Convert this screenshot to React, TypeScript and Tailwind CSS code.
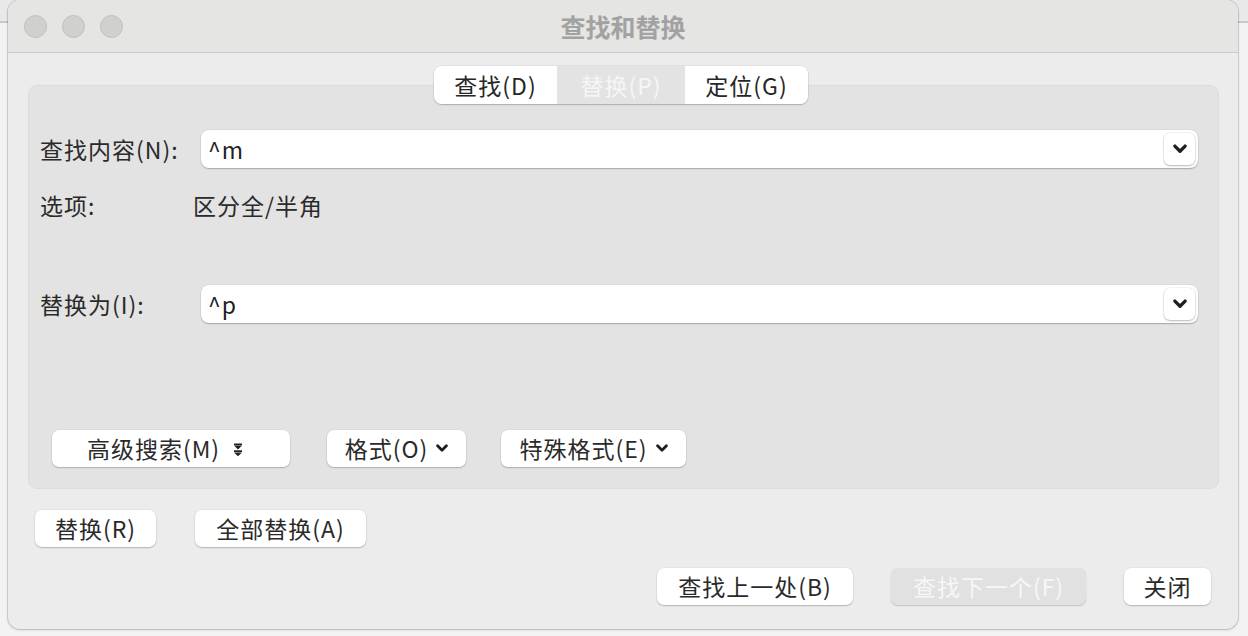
import React from "react";

const font = { fontFamily: '"Noto Sans CJK SC", "Liberation Sans", sans-serif' };

const Chevron = ({ size = 12, stroke = 2.6 }: { size?: number; stroke?: number }) => (
  <svg width={size} height={size * 0.7} viewBox="0 0 12 8" fill="none">
    <path d="M1.6 1.6 L6 6 L10.4 1.6" stroke="#1f1f1f" strokeWidth={stroke} strokeLinecap="round" strokeLinejoin="round" />
  </svg>
);

const DoubleArrow = () => (
  <svg width="10" height="14" viewBox="0 0 10 14">
    <rect x="1" y="0.5" width="8" height="1.7" fill="#1f1f1f" />
    <path d="M1 2.6 H9 L5 6.4 Z" fill="#1f1f1f" />
    <rect x="1" y="7.3" width="8" height="1.7" fill="#1f1f1f" />
    <path d="M1 9.4 H9 L5 13.2 Z" fill="#1f1f1f" />
  </svg>
);

const Btn = ({ children, w, disabled }: { children: React.ReactNode; w: string; disabled?: boolean }) => (
  <div
    className={`${w} h-[37px] flex items-center justify-center rounded-[7px] text-[23px] tracking-[1px] leading-none ${
      disabled
        ? "bg-[#e1e1e1] text-[#f7f7f7] shadow-[0_1px_1.5px_rgba(0,0,0,0.18)]"
        : "bg-white text-[#2a2a2a] shadow-[0_1px_1.5px_rgba(0,0,0,0.22),0_0_0_0.5px_rgba(0,0,0,0.06)]"
    }`}
  >
    {children}
  </div>
);

const ComboField = ({ value }: { value: string }) => (
  <div className="flex-1 h-[38px] bg-white rounded-[8px] shadow-[0_1px_1.5px_rgba(0,0,0,0.25),0_0_0_0.5px_rgba(0,0,0,0.06)] flex items-center pl-[7px] pr-[3px]">
    <span className="flex-1 text-[23px] leading-none text-[#1f1f1f]">{value}</span>
    <div className="w-[31px] h-[32px] rounded-[6px] bg-white shadow-[0_1px_2px_rgba(0,0,0,0.25),0_0_0_0.5px_rgba(0,0,0,0.08)] flex items-center justify-center">
      <Chevron size={14} stroke={2.8} />
    </div>
  </div>
);

export default function App() {
  return (
    <div
      style={font}
      className="w-[1248px] h-[636px] overflow-hidden bg-[linear-gradient(to_bottom,#e9e9e9_0px,#e9e9e9_21px,#c9c9c9_21px,#c9c9c9_23px,#f3f3f3_23px)] pl-[8px]"
    >
      <div className="w-[1230px] h-[629px] rounded-[12px] overflow-hidden bg-[#ececec] shadow-[0_0_0_1px_rgba(0,0,0,0.12),0_1px_3px_rgba(0,0,0,0.15)] flex flex-col">
        {/* title bar */}
        <div className="h-[53px] shrink-0 bg-[#e5e5e3] border-b border-[#cbcbc9] grid grid-cols-[1fr_auto_1fr] items-center">
          <div className="flex items-center gap-[15px] pl-[16px]">
            <div className="w-[23px] h-[23px] rounded-full bg-[#d0d0ce] border border-[#c0c0be]" />
            <div className="w-[23px] h-[23px] rounded-full bg-[#d0d0ce] border border-[#c0c0be]" />
            <div className="w-[23px] h-[23px] rounded-full bg-[#d0d0ce] border border-[#c0c0be]" />
          </div>
          <div className="text-[25px] font-bold text-[#a2a2a2] leading-none">查找和替换</div>
          <div />
        </div>

        {/* content */}
        <div className="flex-1 flex flex-col px-[20px] pr-[19px]">
          {/* tabs */}
          <div className="relative z-10 mt-[13px] flex justify-center pr-[5px]">
            <div className="flex h-[38px] rounded-[8px] shadow-[0_1px_1.5px_rgba(0,0,0,0.22),0_0_0_0.5px_rgba(0,0,0,0.08)] overflow-hidden text-[23px] tracking-[1px] leading-none">
              <div className="w-[123px] bg-white text-[#262626] flex items-center justify-center">查找(D)</div>
              <div className="w-[128px] bg-[#e3e3e3] text-[#f6f6f6] flex items-center justify-center">替换(P)</div>
              <div className="w-[123px] bg-white text-[#262626] flex items-center justify-center">定位(G)</div>
            </div>
          </div>

          {/* group panel */}
          <div className="-mt-[19px] h-[404px] rounded-[9px] bg-[#e3e3e3] border border-[#dcdcdc] pt-[44px] pl-[11px] pr-[20px] flex flex-col text-[23px] tracking-[1px] text-[#2a2a2a]">
            <div className="flex items-center">
              <div className="w-[161px] leading-none">查找内容(N):</div>
              <ComboField value="^m" />
            </div>
            <div className="flex items-center h-[30px] mt-[22px] leading-none">
              <div className="w-[153px]">选项:</div>
              <div>区分全/半角</div>
            </div>
            <div className="flex items-center mt-[65px]">
              <div className="w-[161px] leading-none">替换为(I):</div>
              <ComboField value="^p" />
            </div>
            <div className="flex items-center mt-[107px] ml-[12px] gap-[37px]">
              <Btn w="w-[238px] pr-[12px]">
                <span>高级搜索(M)</span>
                <span className="ml-[13px] mt-[2px]">
                  <DoubleArrow />
                </span>
              </Btn>
              <Btn w="w-[139px]">
                <span>格式(O)</span>
                <span className="ml-[8px]">
                  <Chevron size={12} stroke={2.8} />
                </span>
              </Btn>
              <div className="-ml-[2px]">
                <Btn w="w-[185px]">
                  <span>特殊格式(E)</span>
                  <span className="ml-[8px]">
                    <Chevron size={12} stroke={2.8} />
                  </span>
                </Btn>
              </div>
            </div>
          </div>

          {/* replace buttons */}
          <div className="flex items-center gap-[39px] mt-[21px] pl-[7px]">
            <Btn w="w-[121px]">替换(R)</Btn>
            <Btn w="w-[171px]">全部替换(A)</Btn>
          </div>

          {/* bottom buttons */}
          <div className="flex items-center justify-end gap-[38px] mt-[21px] pr-[8px]">
            <Btn w="w-[196px]">查找上一处(B)</Btn>
            <Btn w="w-[195px]" disabled>
              查找下一个(F)
            </Btn>
            <Btn w="w-[87px]">关闭</Btn>
          </div>
        </div>
      </div>
    </div>
  );
}
